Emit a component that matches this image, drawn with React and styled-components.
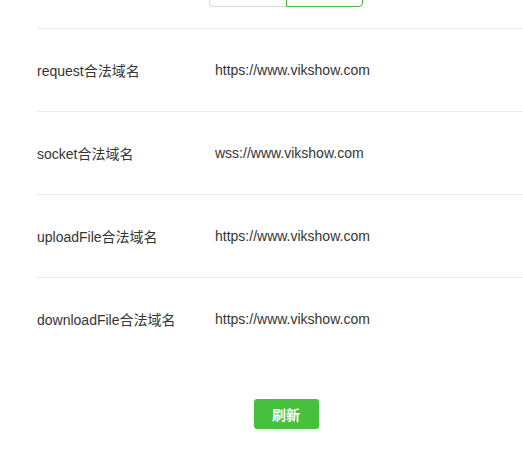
import React from "react";
import styled, { createGlobalStyle } from "styled-components";

const GlobalStyle = createGlobalStyle`
  html, body {
    margin: 0;
    padding: 0;
    background: #fff;
    overflow: hidden;
  }
  body {
    font-family: "Liberation Sans", Arial, "Noto Sans CJK SC", sans-serif;
    font-size: 14px;
    color: #353535;
  }
`;

const domains = [
  { label: "request合法域名", value: "https://www.vikshow.com" },
  { label: "socket合法域名", value: "wss://www.vikshow.com" },
  { label: "uploadFile合法域名", value: "https://www.vikshow.com" },
  { label: "downloadFile合法域名", value: "https://www.vikshow.com" },
];

function App() {
  return (
    <>
      <GlobalStyle />
      <Page>
        {/* tab labels sit above the visible area */}
        <TabGroup>
          <Tab />
          <Tab $active />
        </TabGroup>
        <DomainList>
          {domains.map((d) => (
            <DomainRow key={d.label}>
              <Label>{d.label}</Label>
              <Value>{d.value}</Value>
            </DomainRow>
          ))}
        </DomainList>
        <Footer>
          <RefreshButton type="button">刷新</RefreshButton>
        </Footer>
      </Page>
    </>
  );
}

const Page = styled.div`
  width: 498px;
  margin-left: 37px;
  display: flex;
  flex-direction: column;
`;

const TabGroup = styled.div`
  display: flex;
  justify-content: center;
  margin-top: -23px;
  margin-bottom: 21px;
`;

const Tab = styled.div`
  width: 77px;
  height: 30px;
  box-sizing: border-box;
  border: 1px solid ${(p) => (p.$active ? "#44b549" : "#d9dadc")};

  &:first-child {
    border-right: 0;
    border-radius: 0 0 0 4px;
  }
  &:last-child {
    border-radius: 0 0 4px 0;
  }
`;

const DomainList = styled.div`
  display: flex;
  flex-direction: column;
`;

const DomainRow = styled.div`
  height: 82px;
  border-top: 1px solid #ececec;
  display: flex;
  align-items: center;
  font-size: 14px;
  color: #353535;
`;

const Label = styled.div`
  width: 178px;
  flex-shrink: 0;
`;

const Value = styled.div`
  flex: 1;
`;

const Footer = styled.div`
  display: flex;
  justify-content: center;
  padding-top: 39px;
`;

const RefreshButton = styled.button`
  width: 65px;
  height: 30px;
  border: 0;
  border-radius: 3px;
  background-color: #46c13e;
  color: #fff;
  font-family: "Liberation Sans", Arial, "Noto Sans CJK SC", sans-serif;
  font-size: 14px;
  font-weight: bold;
  padding: 0;
  cursor: pointer;
`;

export default App;
